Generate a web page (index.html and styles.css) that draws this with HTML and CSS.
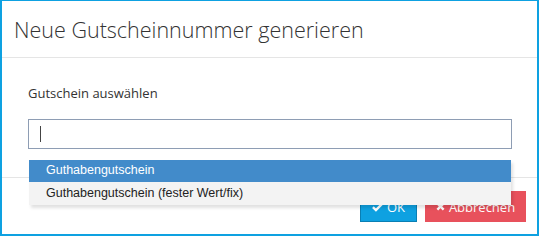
FILE: index.html
```html
<!DOCTYPE html>
<html lang="de">
<head>
<meta charset="utf-8">
<title>Neue Gutscheinnummer generieren</title>
<link rel="stylesheet" href="styles.css">
</head>
<body>
<div class="modal">
  <div class="modal-header">
    <h4 class="modal-title">Neue Gutscheinnummer generieren</h4>
  </div>
  <div class="modal-body">
    <label class="field-label">Gutschein auswählen</label>
    <div class="select-wrap">
      <div class="select-input"><span class="caret-line"></span></div>
      <ul class="dropdown">
        <li class="option active">Guthabengutschein</li>
        <li class="option">Guthabengutschein (fester Wert/fix)</li>
      </ul>
    </div>
  </div>
  <div class="modal-footer">
    <button class="btn btn-ok"><svg class="icon" viewBox="0 0 12 10" width="11" height="10"><path d="M1 5.2 L4.3 8.4 L11 1.6" fill="none" stroke="#fff" stroke-width="2.6" stroke-linejoin="miter"/></svg>OK</button>
    <button class="btn btn-cancel"><svg class="icon" viewBox="0 0 10 10" width="9" height="9"><path d="M1.5 1.5 L8.5 8.5 M8.5 1.5 L1.5 8.5" fill="none" stroke="#fff" stroke-width="2.6"/></svg>Abbrechen</button>
  </div>
</div>
</body>
</html>
```

FILE: styles.css
```css
html, body {
  margin: 0;
  padding: 0;
  background: #fff;
}
.modal {
  box-sizing: border-box;
  width: 539px;
  height: 236px;
  border-style: solid;
  border-color: #0ea1e1;
  border-width: 1px 2px 2px 2px;
  font-family: "Open Sans", "Liberation Sans", sans-serif;
  color: #333;
  background: #fff;
  overflow: hidden;
}
.modal-header {
  padding: 14px 12px 13px 12px;
  border-bottom: 1px solid #e5e5e5;
}
.modal-title {
  margin: 0;
  font-size: 21.5px;
  font-weight: 300;
  line-height: 29px;
  color: #333;
}
.modal-body {
  padding: 26px 25px 28px 26px;
}
.field-label {
  display: block;
  font-size: 13px;
  line-height: 18px;
  margin-bottom: 17px;
  color: #333;
}
.select-wrap {
  position: relative;
  width: 484px;
}
.select-input {
  box-sizing: border-box;
  height: 30px;
  border: 1px solid #8e9db4;
  display: flex;
  align-items: center;
  padding-left: 11px;
}
.caret-line {
  display: block;
  width: 1px;
  height: 16px;
  background: #444;
}
.dropdown {
  position: absolute;
  left: 1px;
  right: 1px;
  top: 41px;
  margin: 0;
  padding: 0;
  list-style: none;
  background: #f3f3f3;
  box-shadow: 2px 3px 3px rgba(0, 0, 0, 0.12);
  font-family: "Liberation Sans", Arial, sans-serif;
  font-size: 12.5px;
  z-index: 5;
}
.option {
  height: 22px;
  line-height: 21px;
  padding-left: 17px;
  color: #222;
}
.option + .option {
  height: 23px;
  line-height: 23px;
}
.option.active {
  background: #428bca;
  color: #fff;
}
.modal-footer {
  border-top: 1px solid #e5e5e5;
  padding: 13px 11px 12px 11px;
  display: flex;
  justify-content: flex-end;
  gap: 8px;
}
.btn {
  box-sizing: border-box;
  height: 31px;
  border: 1px solid transparent;
  display: flex;
  align-items: center;
  justify-content: center;
  gap: 4px;
  font-family: "Open Sans", "Liberation Sans", sans-serif;
  font-size: 13px;
  color: #fff;
  padding: 0;
}
.btn-ok {
  width: 57px;
  background: #0ea1e1;
  border-color: #0a7fb4;
}
.btn-cancel {
  width: 101px;
  background: #e8515c;
  border-color: #e8515c;
}
.icon {
  display: block;
}
```
